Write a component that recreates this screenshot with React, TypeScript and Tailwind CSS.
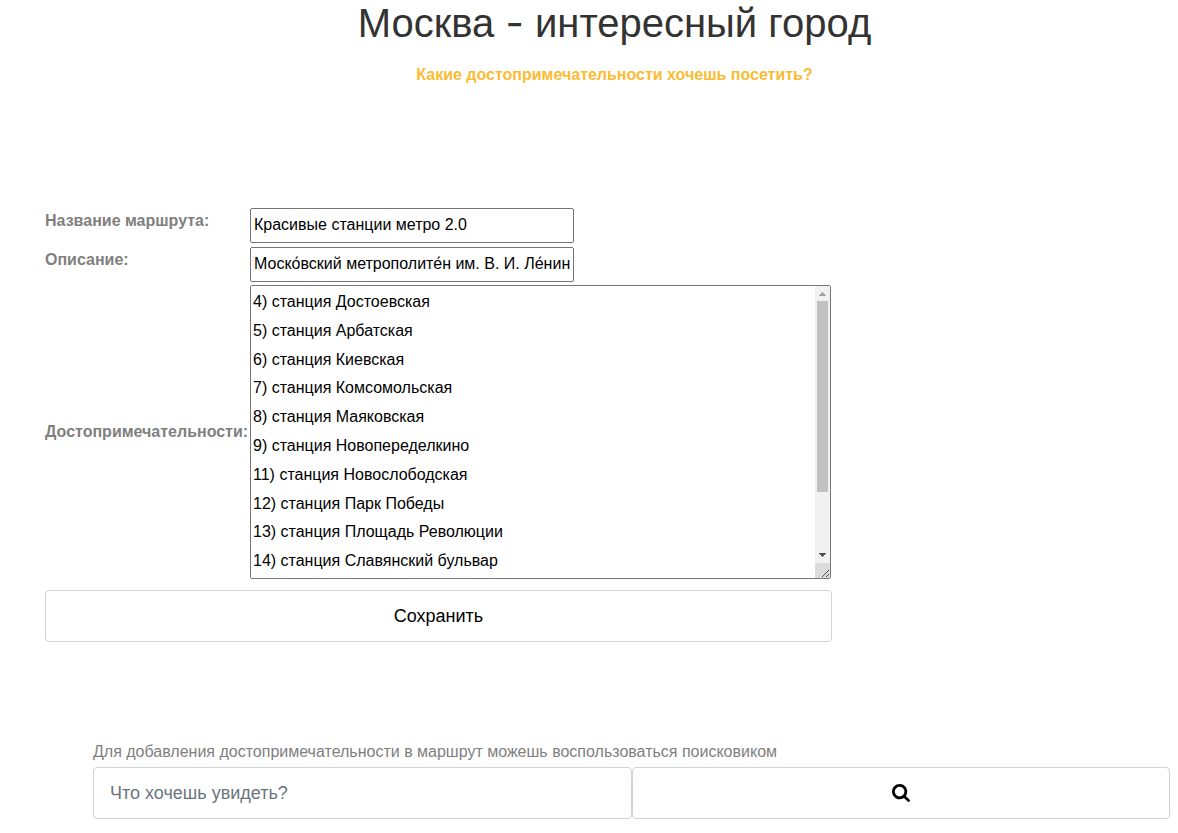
const sights = [
  "4) станция Достоевская",
  "5) станция Арбатская",
  "6) станция Киевская",
  "7) станция Комсомольская",
  "8) станция Маяковская",
  "9) станция Новопеределкино",
  "11) станция Новослободская",
  "12) станция Парк Победы",
  "13) станция Площадь Революции",
  "14) станция Славянский бульвар",
  "15) станция Таганская",
  "16) станция Электрозаводская",
  "17) станция Проспект Мира",
].join("\n");

function SearchIcon() {
  return (
    <svg viewBox="64 128 1664 1664" className="size-[18px] fill-current" aria-hidden="true">
      <path d="M1216 832q0-185-131.5-316.5t-316.5-131.5-316.5 131.5-131.5 316.5 131.5 316.5 316.5 131.5 316.5-131.5 131.5-316.5zm512 832q0 52-38 90t-90 38q-54 0-90-38l-343-342q-179 124-399 124-143 0-273.5-55.5t-225-150-150-225-55.5-273.5 55.5-273.5 150-225 225-150 273.5-55.5 273.5 55.5 225 150 150 225 55.5 273.5q0 220-124 399l343 343q37 37 37 90z" />
    </svg>
  );
}

function Header() {
  return (
    <header className="pl-[51px] text-center">
      <h1 className="text-[40px] leading-[46px] text-[#333333]">
        Москва <span className="font-['Inter',sans-serif]">-</span> интересный город
      </h1>
      <p className="mt-3.5 font-bold leading-[30px] text-[#fbbc34]">
        Какие достопримечательности хочешь посетить?
      </p>
    </header>
  );
}

/* Vertical scroll track with arrows and the resize corner. */
function ScrollTrack() {
  return (
    <div
      aria-hidden="true"
      className="pointer-events-none absolute inset-y-px right-px flex w-[15px] flex-col bg-[#f1f1f1]"
    >
      <svg viewBox="0 0 15 15" className="h-[15px] shrink-0" shapeRendering="crispEdges">
        <path d="M7 6h1v1h1v1h1v1h1v1H4V9h1V8h1V7h1z" fill="#a3a3a3" />
      </svg>
      <div className="flex grow flex-col px-0.5">
        <div className="h-[191px] bg-[#c1c1c1]" />
      </div>
      <svg viewBox="0 0 15 15" className="h-[15px] shrink-0" shapeRendering="crispEdges">
        <path d="M4 5h7v1h-1v1H9v1H8v1H7V8H6V7H5V6H4z" fill="#505050" />
      </svg>
      <svg viewBox="0 0 15 15" className="h-[15px] shrink-0 bg-[#dcdcdc]">
        <path d="M7 14l7-7M11 14l3-3" stroke="#505050" fill="none" />
      </svg>
    </div>
  );
}

function RouteForm() {
  const field =
    "h-[35px] w-[324px] rounded-[2px] border border-[#767676] bg-white px-[3px] pb-0.5 text-black outline-none";
  const label = "font-bold text-[#808080]";
  return (
    <form className="mt-[118px] ml-[45px] w-fit" onSubmit={(e) => e.preventDefault()}>
      <div className="grid grid-cols-[205px_auto] gap-y-1">
        <label htmlFor="route-name" className={`${label} leading-[26px]`}>
          Название маршрута:
        </label>
        <input id="route-name" className={field} defaultValue="Красивые станции метро 2.0" />
        <label htmlFor="route-about" className={`${label} leading-[26px]`}>
          Описание:
        </label>
        <input
          id="route-about"
          className={field}
          defaultValue="Моско́вский метрополите́н им. В. И. Ле́нина"
        />
      </div>
      <div className="mt-[3px] grid grid-cols-[205px_auto] items-center">
        <label htmlFor="route-sights" className={label}>
          Достопримечательности:
        </label>
        <div className="pr-px">
          <div className="relative">
            <textarea
              id="route-sights"
              className="block h-[294px] w-[581px] resize-none overflow-y-scroll rounded-[2px] border border-[#767676] bg-white p-[2px] leading-[1.8] text-black outline-none"
              defaultValue={sights}
            />
            <ScrollTrack />
          </div>
        </div>
      </div>
      <button
        type="submit"
        className="mt-[11px] h-[52px] w-full rounded-[4px] border border-[#ced4da] bg-white text-lg text-black"
      >
        Сохранить
      </button>
    </form>
  );
}

function Search() {
  return (
    <form className="mt-24 pr-2 pl-[93px]" onSubmit={(e) => e.preventDefault()}>
      <label htmlFor="search" className="block pb-px leading-7 text-[#808080]">
        Для добавления достопримечательности в маршрут можешь воспользоваться поисковиком
      </label>
      <div className="grid grid-cols-2">
        <input
          id="search"
          type="search"
          placeholder="Что хочешь увидеть?"
          className="h-[52px] min-w-0 rounded-[4px] border border-[#ced4da] bg-white px-4 text-lg text-black outline-none placeholder:text-[#6c757d]"
        />
        <button
          type="submit"
          aria-label="Найти"
          className="flex h-[52px] items-center justify-center rounded-[4px] border border-[#ced4da] bg-white text-black"
        >
          <SearchIcon />
        </button>
      </div>
    </form>
  );
}

export default function App() {
  return (
    <main className="bg-white pb-3 font-['Liberation_Sans',Arial,sans-serif] text-base">
      <Header />
      <RouteForm />
      <Search />
    </main>
  );
}
